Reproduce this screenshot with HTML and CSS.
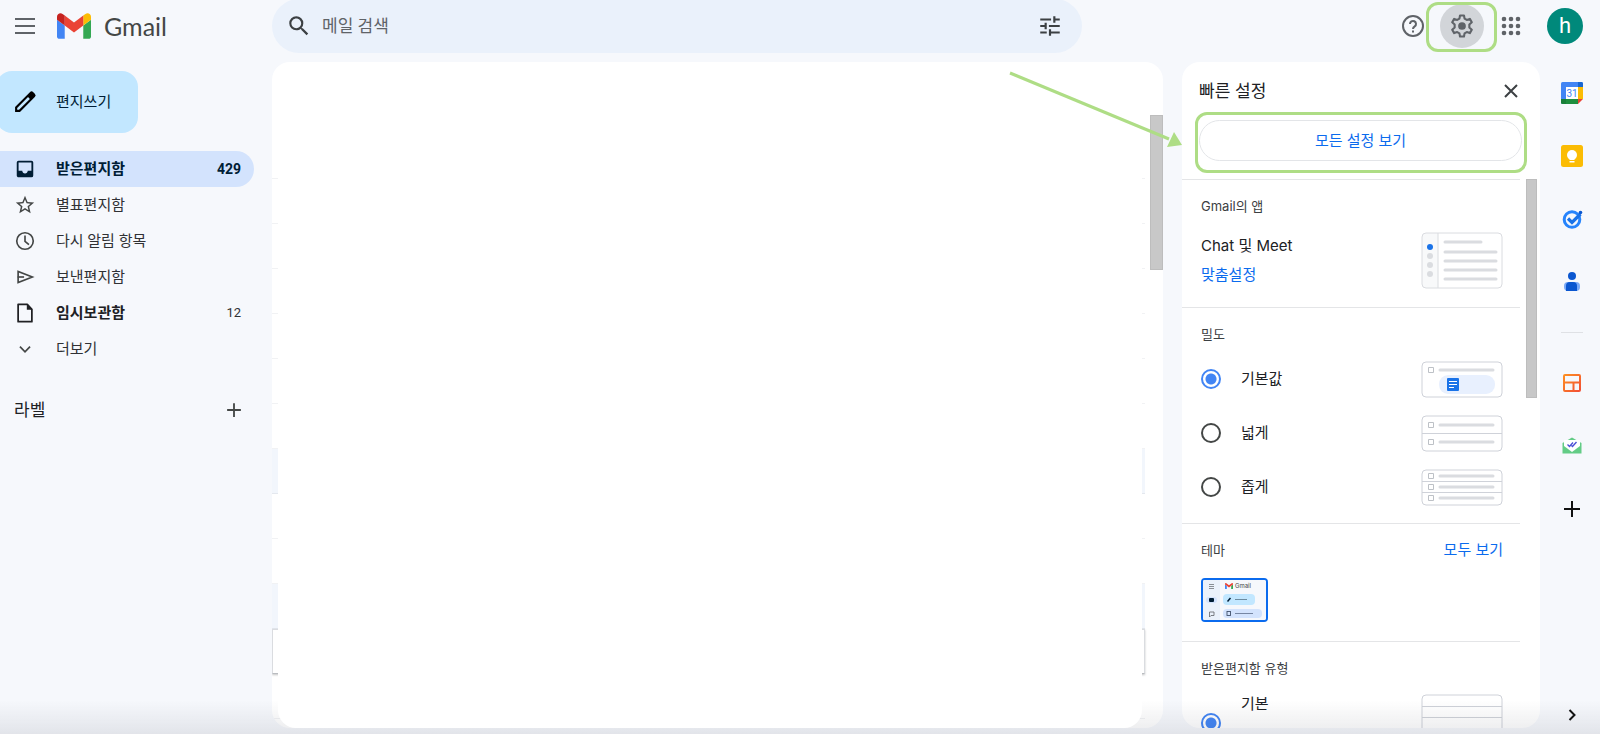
FILE: index.html
```html
<!DOCTYPE html>
<html lang="ko">
<head>
  <meta charset="utf-8">
  <title>Gmail</title>
  <link rel="stylesheet" href="styles.css">
</head>
<body>
  <header class="header">
    <div class="brand">
      <button class="icon-btn" aria-label="기본 메뉴">
        <svg width="24" height="24" viewBox="0 0 24 24" stroke="#5f6368" stroke-width="2"><path d="M2 5h20M2 12h20M2 19h20"/></svg>
      </button>
      <svg class="logo" width="34" height="26" viewBox="52 42 88 66">
        <path fill="#4285f4" d="M58 108h14V74L52 59v43c0 3.32 2.69 6 6 6"/>
        <path fill="#34a853" d="M120 108h14c3.32 0 6-2.69 6-6V59l-20 15"/>
        <path fill="#fbbc04" d="M120 48v26l20-15v-8c0-7.42-8.47-11.65-14.4-7.2"/>
        <path fill="#ea4335" d="M72 74V48l24 18 24-18v26L96 92"/>
        <path fill="#c5221f" d="M52 51v8l20 15V48l-5.6-4.2c-5.94-4.45-14.4-.22-14.4 7.2"/>
      </svg>
      <span class="brand-name">Gmail</span>
    </div>
    <form class="search">
      <button type="button" class="icon-btn" aria-label="검색">
        <svg width="26" height="26" viewBox="0 0 24 24" fill="#3c4043"><path d="M15.5 14h-.79l-.28-.27A6.47 6.47 0 0 0 16 9.500 6.500 6.500 0 1 0 9.500 16c1.610 0 3.090-.59 4.230-1.570l.27.28v.79l5 4.990L20.490 19l-4.990-5zm-6 0C7.010 14 5 11.990 5 9.500S7.010 5 9.500 5 14 7.010 14 9.500 11.990 14 9.500 14z"/></svg>
      </button>
      <input type="text" placeholder="메일 검색" aria-label="메일 검색">
      <button type="button" class="icon-btn" aria-label="검색 옵션">
        <svg width="26" height="26" viewBox="0 0 24 24" fill="#3c4043"><path d="M3 17v2h6v-2H3zM3 5v2h10V5H3zm10 16v-2h8v-2h-8v-2h-2v6h2zM7 9v2H3v2h4v2h2V9H7zm14 4v-2H11v2h10zm-6-4h2V7h4V5h-4V3h-2v6z"/></svg>
      </button>
    </form>
    <div class="tools">
      <button class="icon-btn" aria-label="지원">
        <svg width="24" height="24" viewBox="0 0 24 24" fill="none" stroke="#5f6368" stroke-width="2"><circle cx="12" cy="12" r="10"/><path d="M9 10a3 3 0 1 1 4.700 2.400C12.600 13.200 12 13.700 12 15"/><path d="M12 16.500v2"/></svg>
      </button>
      <div class="gear">
        <button class="icon-btn gear-btn" aria-label="설정">
          <svg width="28" height="28" viewBox="0 0 24 24"><path fill="none" stroke="#5f6368" stroke-width="1.800" stroke-linejoin="round" d="M10.300 3h3.400l.5 2.700 1.900 1.100 2.600-.9 1.700 2.900-2.100 1.900v2.600l2.100 1.900-1.700 2.900-2.600-.9-1.900 1.100-.5 2.700h-3.400l-.5-2.700-1.900-1.100-2.600.9-1.700-2.900 2.100-1.900v-2.600L3.600 8.800l1.700-2.900 2.600.9 1.900-1.100z"/><circle cx="12" cy="12" r="3.300" fill="#5f6368"/></svg>
        </button>
        <span class="highlight gear-mark"></span>
      </div>
      <button class="icon-btn" aria-label="Google 앱">
        <svg width="24" height="24" viewBox="0 0 24 24" fill="#5f6368"><circle cx="5" cy="5" r="2.300"/><circle cx="12" cy="5" r="2.300"/><circle cx="19" cy="5" r="2.300"/><circle cx="5" cy="12" r="2.300"/><circle cx="12" cy="12" r="2.300"/><circle cx="19" cy="12" r="2.300"/><circle cx="5" cy="19" r="2.300"/><circle cx="12" cy="19" r="2.300"/><circle cx="19" cy="19" r="2.300"/></svg>
      </button>
      <button class="avatar" aria-label="계정">h</button>
    </div>
  </header>

  <div class="page">
    <aside class="sidebar">
      <button class="compose">
        <svg width="28" height="28" viewBox="0 0 24 24"><path d="M20.400 4.900 19.100 3.600a2 2 0 0 0-2.900 0L3.500 16.300V20.500h4.200L20.400 7.800a2 2 0 0 0 0-2.900zM6.900 18.700H5.300v-1.600L14.600 7.800l1.600 1.600z"/></svg>
        <span>편지쓰기</span>
      </button>
      <nav class="nav">
        <a href="#" class="nav-item active">
          <svg width="22" height="22" viewBox="0 0 24 24" fill="#001d35"><path d="M19 3H5a2 2 0 0 0-2 2v14c0 1.100.9 2 2 2h14a2 2 0 0 0 2-2V5a2 2 0 0 0-2-2zm0 11h-4c0 1.600-1.400 3-3 3s-3-1.400-3-3H5V5h14z"/></svg>
          <span class="name">받은편지함</span><span class="count">429</span>
        </a>
        <a href="#" class="nav-item">
          <svg width="22" height="22" viewBox="0 0 24 24" fill="#444746"><path d="m22 9.240-7.190-.62L12 2 9.190 8.630 2 9.240l5.460 4.730L5.820 21 12 17.270 18.180 21l-1.630-7.030L22 9.240zM12 15.400l-3.760 2.270 1-4.280-3.320-2.880 4.380-.38L12 6.100l1.710 4.040 4.380.38-3.320 2.880 1 4.280L12 15.400z"/></svg>
          <span class="name">별표편지함</span>
        </a>
        <a href="#" class="nav-item">
          <svg width="22" height="22" viewBox="0 0 24 24" fill="none" stroke="#444746" stroke-width="1.800"><circle cx="12" cy="12" r="9"/><path d="M12 6v6.300l4.300 3.700"/></svg>
          <span class="name">다시 알림 항목</span>
        </a>
        <a href="#" class="nav-item">
          <svg width="22" height="22" viewBox="0 0 24 24" fill="none" stroke="#444746" stroke-width="1.800"><path d="M4.500 6v12L20 12z"/><path d="M4 12h7"/></svg>
          <span class="name">보낸편지함</span>
        </a>
        <a href="#" class="nav-item bold">
          <svg width="22" height="22" viewBox="0 0 24 24"><path fill="none" stroke="#202124" stroke-width="1.900" stroke-linejoin="round" d="M4.500 2.500h10l5 5.500v13.500h-15z"/><path fill="#202124" d="M14 2v6.500h6z"/></svg>
          <span class="name">임시보관함</span><span class="count">12</span>
        </a>
        <a href="#" class="nav-item">
          <svg width="22" height="22" viewBox="0 0 24 24" fill="none" stroke="#444746" stroke-width="1.900"><path d="m6.500 9.500 5.500 5.500 5.500-5.500"/></svg>
          <span class="name">더보기</span>
        </a>
      </nav>
      <div class="labels">
        <h2>라벨</h2>
        <button class="icon-btn" aria-label="새 라벨 만들기">
          <svg width="22" height="22" viewBox="0 0 24 24" stroke="#444746" stroke-width="2"><path d="M12 4.500v15M4.500 12h15"/></svg>
        </button>
      </div>
    </aside>

    <main class="mail">
      <div class="rows">
        <div class="row"></div>
        <div class="row"></div>
        <div class="row"></div>
        <div class="row"></div>
        <div class="row"></div>
        <div class="row"></div>
        <div class="row"></div>
        <div class="row read"></div>
        <div class="row"></div>
        <div class="row"></div>
        <div class="row read"></div>
        <div class="row hovered"></div>
        <div class="row"></div>
      </div>
      <div class="cover"></div>
      <div class="mail-thumb"></div>
    </main>

    <div class="settings-wrap">
      <svg class="arrow" width="173" height="90" viewBox="0 0 173 90"><path d="M1 11 160 77" stroke="#aedd85" stroke-width="3"/><path d="M173 83 165 70 158 85z" fill="#aedd85"/></svg>
      <aside class="settings">
        <div class="settings-head">
          <h2>빠른 설정</h2>
          <button class="icon-btn" aria-label="닫기">
            <svg width="20" height="20" viewBox="0 0 20 20" stroke="#3c4043" stroke-width="2"><path d="m4 4 12 12M16 4 4 16"/></svg>
          </button>
        </div>
        <div class="highlight all-mark">
          <button class="all-settings">모든 설정 보기</button>
        </div>
        <div class="settings-body">
          <section class="section apps">
            <h3>Gmail의 앱</h3>
            <div class="option">
              <div class="option-text">
                <span>Chat 및 Meet</span>
                <a href="#">맞춤설정</a>
              </div>
              <svg width="82" height="57" viewBox="0 0 82 57">
                <rect x="1" y="1" width="80" height="55" rx="4" fill="#fff"/>
                <path d="M17 1H5a4 4 0 0 0-4 4v47a4 4 0 0 0 4 4h12z" fill="#f8f9fa"/>
                <path d="M17 1v55" stroke="#dadce0"/>
                <rect x="1" y="1" width="80" height="55" rx="4" fill="none" stroke="#dadce0"/>
                <circle cx="9" cy="15" r="3" fill="#1a73e8"/>
                <g fill="#dadce0"><circle cx="9" cy="24" r="3"/><circle cx="9" cy="33" r="3"/><circle cx="9" cy="42" r="3"/></g>
                <g stroke="#dadce0" stroke-width="3" stroke-linecap="round"><path d="M24 10h36M24 20h51M24 29h51M24 38h51M24 47h51"/></g>
              </svg>
            </div>
          </section>

          <section class="section density">
            <h3>밀도</h3>
            <div class="option">
              <input type="radio" name="density" id="density-default" checked>
              <label for="density-default">기본값</label>
              <svg width="82" height="37" viewBox="0 0 82 37">
                <rect x="1" y="1" width="80" height="35" rx="4" fill="#fff" stroke="#cfd2d9"/>
                <path d="M7.500 6.500h5v5h-5z" fill="none" stroke="#bdc1c6"/>
                <path d="M19 9h53" stroke="#dadce0" stroke-width="3" stroke-linecap="round"/>
                <rect x="18" y="14" width="56" height="19" rx="9" fill="#e8f0fe"/>
                <rect x="26" y="17" width="12" height="13" rx="1" fill="#1a73e8"/>
                <path d="M28 20.500h8M28 23.500h8M28 26.500h5" stroke="#fff"/>
              </svg>
            </div>
            <div class="option">
              <input type="radio" name="density" id="density-wide">
              <label for="density-wide">넓게</label>
              <svg width="82" height="37" viewBox="0 0 82 37">
                <rect x="1" y="1" width="80" height="35" rx="4" fill="#fff" stroke="#cfd2d9"/>
                <path d="M1 18.500h80" stroke="#cfd2d9"/>
                <path d="M7.500 7.500h5v5h-5zM7.500 24.500h5v5h-5z" fill="none" stroke="#bdc1c6"/>
                <path d="M19 10h53M19 27h53" stroke="#dadce0" stroke-width="3" stroke-linecap="round"/>
              </svg>
            </div>
            <div class="option">
              <input type="radio" name="density" id="density-narrow">
              <label for="density-narrow">좁게</label>
              <svg width="82" height="37" viewBox="0 0 82 37">
                <rect x="1" y="1" width="80" height="35" rx="4" fill="#fff" stroke="#cfd2d9"/>
                <path d="M1 12.500h80M1 23.500h80" stroke="#cfd2d9"/>
                <path d="M7.500 4.500h5v5h-5zM7.500 15.500h5v5h-5zM7.500 26.500h5v5h-5z" fill="none" stroke="#bdc1c6"/>
                <path d="M19 7h53M19 18h53M19 29h53" stroke="#dadce0" stroke-width="3" stroke-linecap="round"/>
              </svg>
            </div>
          </section>

          <section class="section themes">
            <div class="section-head">
              <h3>테마</h3>
              <a href="#">모두 보기</a>
            </div>
            <button class="theme" aria-label="기본 테마">
              <svg width="63" height="40" viewBox="0 0 63 40">
                <rect width="63" height="40" fill="#f6f8fc"/>
                <rect width="17" height="40" fill="#eaf1fb"/>
                <path d="M6 4.500h5M6 6.500h5M6 8.500h5" stroke="#5f6368" stroke-width=".7"/>
                <rect x="3" y="17" width="11" height="6" rx="3" fill="#d3e3fd"/>
                <rect x="6" y="18" width="5" height="4" rx="1" fill="#001d35"/>
                <path d="M6.500 32h4.500v3.500h-3l-1.500 1.500z" fill="none" stroke="#5f6368" stroke-width=".8"/>
                <svg x="22" y="3" width="8" height="6" viewBox="52 42 88 66"><path fill="#4285f4" d="M58 108h14V74L52 59v43c0 3.300 2.700 6 6 6"/><path fill="#34a853" d="M120 108h14c3.300 0 6-2.700 6-6V59l-20 15"/><path fill="#ea4335" d="M52 51v8l44 33 44-33v-8c0-7.400-8.500-11.600-14.400-7.200L96 66 66.400 43.800C60.500 39.400 52 43.600 52 51"/></svg>
                <text x="32" y="8" class="theme-name">Gmail</text>
                <rect x="20" y="14" width="32" height="11" rx="4" fill="#c2e7ff"/>
                <path d="m24.500 21.500 3-3.500" stroke="#001d35" stroke-width="1.500"/>
                <path d="M32 19.500h12" stroke="#6c8ba0"/>
                <rect x="20" y="29" width="39" height="9" rx="4" fill="#d3e3fd"/>
                <rect x="24" y="31.500" width="3.500" height="4" fill="none" stroke="#41506b" stroke-width=".9"/>
                <path d="M32 33.500h18" stroke="#7686a3"/>
              </svg>
            </button>
          </section>

          <section class="section">
            <h3>받은편지함 유형</h3>
            <div class="option inbox-type">
              <input type="radio" name="inbox" id="inbox-default" checked>
              <label for="inbox-default">기본</label>
              <svg width="82" height="57" viewBox="0 0 82 57">
                <rect x="1" y="1" width="80" height="55" rx="4" fill="#fff" stroke="#cfd2d9"/>
                <path d="M1 12.500h80M1 23.500h80M1 35.500h80M1 45.500h80" stroke="#cfd2d9"/>
              </svg>
            </div>
          </section>
        </div>
        <div class="settings-thumb"></div>
      </aside>
    </div>

    <aside class="rail">
      <a href="#" aria-label="Calendar">
        <svg width="22" height="22" viewBox="0 0 22 22">
          <rect width="22" height="22" rx="1.500" fill="#4285f4"/><path d="M17 0h3.500A1.500 1.500 0 0 1 22 1.500V5h-5z" fill="#1967d2"/><path d="M17 5h5v12h-5z" fill="#fbbc04"/><path d="M5 17h12v5H5z" fill="#1e8e3e"/><path d="M0 17h5v5H1.500A1.500 1.500 0 0 1 0 20.500z" fill="#188038"/><path d="M17 17h5v5h-5z" fill="#f6f8fc"/><path d="M17 17h5l-5 5z" fill="#ea4335"/><path d="M5 5h12v12H5z" fill="#fff"/>
          <text x="11" y="15" text-anchor="middle" class="cal-day">31</text>
        </svg>
      </a>
      <a href="#" aria-label="Keep">
        <svg width="22" height="22" viewBox="0 0 22 22"><rect width="22" height="22" rx="2.500" fill="#fbbc04"/><circle cx="11" cy="10" r="5" fill="#fff"/><path d="M8.500 12h5v3h-5zM8.500 16h5v1.500h-5z" fill="#fff"/></svg>
      </a>
      <a href="#" aria-label="Tasks">
        <svg width="22" height="22" viewBox="0 0 22 22" fill="none"><circle cx="11" cy="11.500" r="7.800" stroke="#2684fc" stroke-width="3"/><path d="m7 10.500 4 4 8.500-8.500" stroke="#1a73e8" stroke-width="3.200"/><circle cx="19.500" cy="4.500" r="1.800" fill="#0b57d0"/></svg>
      </a>
      <a href="#" aria-label="주소록">
        <svg width="22" height="22" viewBox="0 0 22 22"><circle cx="11" cy="5" r="4" fill="#0b57d0"/><rect x="3" y="11" width="16" height="9" rx="4" fill="#7baaf7"/><path d="M5 20v-5a4 4 0 0 1 4-4h3a4 4 0 0 1 4 4v5z" fill="#0b57d0"/></svg>
      </a>
      <hr>
      <a href="#" aria-label="부가기능">
        <svg width="22" height="22" viewBox="0 0 22 22" fill="none" stroke="url(#orange)" stroke-width="2"><defs><linearGradient id="orange" x1="0" y1="0" x2="22" y2="22" gradientUnits="userSpaceOnUse"><stop offset="0" stop-color="#ff9a1f"/><stop offset="1" stop-color="#f04438"/></linearGradient></defs><rect x="3" y="3" width="16" height="16" rx="1"/><path d="M3 10.500h16.010M12.500 10.500 12.510 19"/></svg>
      </a>
      <a href="#" aria-label="메일 추적">
        <svg width="22" height="22" viewBox="0 0 22 22"><path d="M1.500 8 11 2.500 20.500 8v10.500h-19z" fill="#63cc86"/><path d="M3 5h16v6l-8 6-8-6z" fill="#fff"/><path d="m6.500 9.500 2 2 3.500-4M10.500 10.500l1 1L15.500 7" fill="none" stroke="#4b4fd6" stroke-width="1.400"/></svg>
      </a>
      <a href="#" aria-label="부가기능 설치하기">
        <svg width="22" height="22" viewBox="0 0 22 22" stroke="#111" stroke-width="2"><path d="M11 3v16M3 11h16"/></svg>
      </a>
      <button class="icon-btn collapse" aria-label="측면 패널 숨기기">
        <svg width="22" height="22" viewBox="0 0 22 22" fill="none" stroke="#111" stroke-width="2"><path d="m8.500 6 5 5-5 5"/></svg>
      </button>
    </aside>
  </div>
  <div class="fade"></div>
</body>
</html>
```

FILE: styles.css
```css
* {
  box-sizing: border-box;
}

body {
  margin: 0;
  height: 100vh;
  display: flex;
  flex-direction: column;
  overflow: hidden;
  background: #f6f8fc;
  color: #202124;
  font-family: Roboto, "Noto Sans CJK KR", sans-serif;
  font-size: 15px;
  line-height: 20px;
}

a {
  color: #0b6bee;
  text-decoration: none;
}

h2,
h3 {
  margin: 0;
  font-weight: 400;
}

h2 {
  font-size: 17px;
}

h3 {
  font-size: 13px;
  color: #3c4043;
}

button {
  border: none;
  padding: 0;
  background: none;
  font: inherit;
  cursor: pointer;
}

svg {
  display: block;
  flex: none;
}

.icon-btn {
  display: flex;
  align-items: center;
  justify-content: center;
}

.highlight {
  border: 3px solid #aedd85;
  border-radius: 12px;
}

/* header */
.header {
  flex: none;
  display: flex;
  align-items: center;
  height: 52px;
  margin-bottom: 10px;
  padding-right: 17px;
}

.brand {
  flex: 0 0 272px;
  display: flex;
  align-items: center;
  padding-left: 13px;
}

.logo {
  margin: 0 13px 0 20px;
}

.brand-name {
  font-family: Lato, sans-serif;
  font-size: 25px;
  color: #444746;
}

.search {
  flex: 0 1 810px;
  display: flex;
  align-items: center;
  gap: 10px;
  height: 54px;
  padding: 0 19px 0 14px;
  border-radius: 27px;
  background: #eaf1fb;
}

.search input {
  flex: 1;
  min-width: 0;
  border: none;
  outline: none;
  padding: 0;
  background: none;
  font: inherit;
  font-size: 17px;
}

.search input::placeholder {
  color: #5f6368;
}

.tools {
  display: flex;
  align-items: center;
  gap: 15px;
  margin-left: auto;
}

.gear {
  position: relative;
}

.gear-btn {
  width: 44px;
  height: 44px;
  border-radius: 50%;
  background: #d2d5d9;
}

.gear-mark {
  position: absolute;
  inset: -2px -13px -4px -14px;
  pointer-events: none;
}

.avatar {
  width: 36px;
  height: 36px;
  margin-left: 9px;
  border-radius: 50%;
  background: #00897b;
  color: #fff;
  font-size: 22px;
}

/* columns */
.page {
  flex: 1;
  display: flex;
  min-height: 0;
}

.sidebar {
  flex: 0 0 272px;
  padding: 9px 18px 0 0;
}

.compose {
  display: flex;
  align-items: center;
  gap: 17px;
  height: 62px;
  margin-left: -4px;
  padding: 0 27px 0 15px;
  border-radius: 16px;
  background: #c2e7ff;
  color: #001d35;
}

.nav {
  margin-top: 18px;
}

.nav-item {
  display: flex;
  align-items: center;
  gap: 20px;
  height: 36px;
  padding: 0 13px 0 14px;
  border-radius: 0 18px 18px 0;
  color: #303134;
}

.nav-item.active {
  background: #d3e3fd;
  color: #001d35;
  font-weight: 700;
}

.nav-item.bold .name {
  font-weight: 700;
  color: #202124;
}

.count {
  margin-left: auto;
  font-size: 13px;
}

.active .count {
  font-size: 14px;
}

.labels {
  display: flex;
  align-items: center;
  justify-content: space-between;
  margin-top: 32px;
  padding: 0 9px 0 14px;
}

/* mail list */
.mail {
  flex: 1;
  position: relative;
  margin-bottom: 6px;
  overflow: hidden;
  border-radius: 18px;
  background: #fff;
}

.rows {
  margin-right: 18px;
  padding-top: 72px;
}

.row {
  height: 45px;
  border-bottom: 1px solid #f1f2f4;
}

.row.read {
  background: #f2f6fc;
  border-bottom-color: #e4e8ee;
}

.row.hovered {
  border: 1px solid #dadce0;
  border-bottom-color: #b9bcc0;
  box-shadow: 0 1px 2px rgba(60, 64, 67, 0.3);
}

/* sits above the bottom fade as well */
.cover {
  position: absolute;
  z-index: 1;
  inset: 0 21px 0 6px;
  border-radius: 18px;
  background: #fff;
}

.mail-thumb {
  position: absolute;
  top: 53px;
  right: 0;
  width: 13px;
  height: 155px;
  border: 1px solid #bdbdbd;
  background: #c8c8c8;
}

/* quick settings */
.settings-wrap {
  position: relative;
  flex: 0 0 358px;
  margin: 0 0 6px 19px;
}

.arrow {
  position: absolute;
  z-index: 2;
  right: 100%;
  top: 0;
}

.settings {
  position: relative;
  display: flex;
  flex-direction: column;
  height: 100%;
  overflow: hidden;
  border-radius: 18px;
  background: #fff;
  font-family: Inter, "Noto Sans CJK KR", sans-serif;
}

.settings-head {
  display: flex;
  align-items: center;
  justify-content: space-between;
  padding: 19px 19px 11px 17px;
}

.all-mark {
  margin: 0 13px 6px;
  padding: 5px 2px 9px 1px;
}

.all-settings {
  width: 100%;
  height: 41px;
  border: 1px solid #e3e5e8;
  border-radius: 21px;
  color: #0b6bee;
}

.settings-body {
  flex: 1;
  min-height: 0;
  margin-right: 20px;
  overflow: hidden;
}

.section {
  padding: 16px 17px 15px 19px;
  border-top: 1px solid #e4e5e7;
}

.section h3 {
  line-height: 20px;
}

.option {
  display: flex;
  align-items: center;
  height: 54px;
}

.section h3 + .option {
  margin-top: 8px;
}

.option svg {
  margin-left: auto;
}

.section.apps h3 + .option {
  height: 64px;
  margin-top: 12px;
}

.option-text {
  display: flex;
  flex-direction: column;
  gap: 9px;
}

.option input {
  appearance: none;
  width: 20px;
  height: 20px;
  margin: 0 20px 0 0;
  border: 2px solid #444746;
  border-radius: 50%;
}

.option input:checked {
  border-color: #4285f4;
  background: radial-gradient(circle, #4285f4 5px, transparent 6px);
}

.density {
  padding-bottom: 9px;
}

.section-head {
  display: flex;
  justify-content: space-between;
}

.themes {
  padding-bottom: 19px;
}

.theme {
  display: block;
  margin-top: 18px;
  overflow: hidden;
  border: 2px solid #0b6bee;
  border-radius: 4px;
}

.theme-name {
  font-size: 6px;
  fill: #444746;
}

.section h3 + .inbox-type {
  height: 57px;
  margin-top: 16px;
}

.inbox-type label {
  align-self: flex-start;
}

.settings-thumb {
  position: absolute;
  top: 117px;
  right: 3px;
  width: 11px;
  height: 219px;
  border: 1px solid #bdbdbd;
  background: #c8c8c8;
}

/* side rail */
.rail {
  flex: 0 0 60px;
  display: flex;
  flex-direction: column;
  align-items: center;
  gap: 41px;
  padding: 20px 0 8px 4px;
}

.rail hr {
  width: 22px;
  margin: -2px 0;
  border: none;
  border-top: 1px solid #dfe1e5;
}

.cal-day {
  font-size: 10px;
  fill: #4285f4;
}

.collapse {
  margin-top: auto;
}

.fade {
  position: fixed;
  inset: auto 0 0;
  height: 34px;
  background: linear-gradient(transparent, rgba(60, 64, 80, 0.1));
  pointer-events: none;
}
```
